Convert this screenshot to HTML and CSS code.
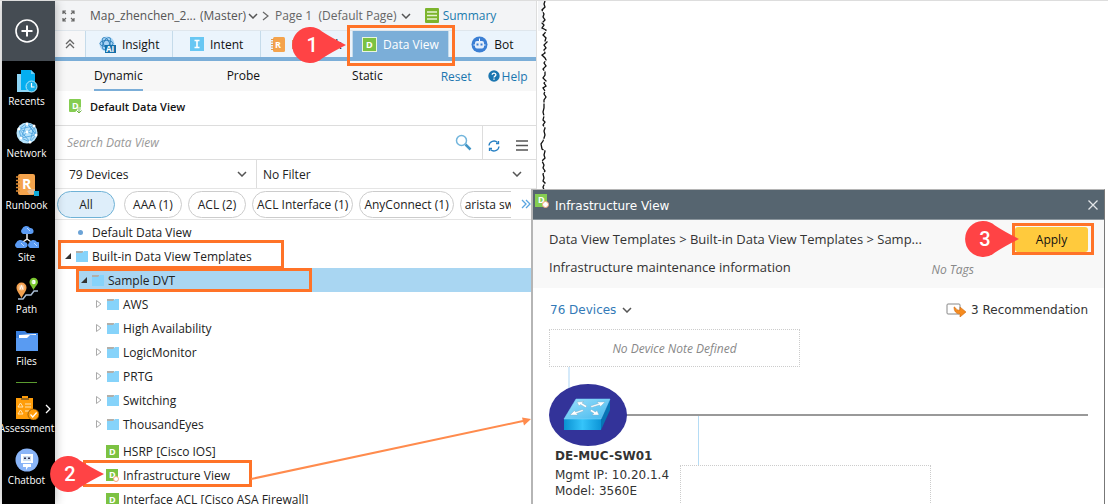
FILE: index.html
```html
<!DOCTYPE html>
<html lang="en">
<head>
    <meta charset="UTF-8">
    <meta name="viewport" content="width=device-width, initial-scale=1.0">
    <title>Data View</title>
    <link rel="stylesheet" href="styles.css">
</head>
<body>
    <!-- shared shapes -->
    <svg class="defs" aria-hidden="true">
        <symbol id="folder" viewBox="0 0 12 12">
            <path d="M0 1h7v3H0z" fill="#b3afa8"/>
            <path d="M0 3h6l2-2h4v11H0z" fill="#86d3fa"/>
        </symbol>
        <symbol id="open" viewBox="0 0 8 8"><path d="M7 1v6H1z" fill="#333"/></symbol>
        <symbol id="closed" viewBox="0 0 8 10"><path d="M1.500 1.500v7L6 5z" fill="#fff" stroke="#aaa"/></symbol>
        <symbol id="down" viewBox="0 0 10 6"><path d="M1 1l4 4 4-4" fill="none" stroke="currentColor" stroke-width="1.500"/></symbol>
        <symbol id="pin" viewBox="0 0 54 36"><path d="M54 18Q40 11 30 4.500A18 18 0 1 0 30 31.500Q40 25 54 18z" fill="#ff4345"/></symbol>
    </svg>

    <nav class="sidebar">
        <button class="add" aria-label="New">
            <svg width="24" height="24" viewBox="0 0 24 24" fill="none" stroke="#fff"><circle cx="12" cy="12" r="11" stroke-width="1.600"/><path d="M12 6.500v11M6.500 12h11" stroke-width="2"/></svg>
        </button>
        <a class="nav-item" href="#">
            <svg width="24" height="24" viewBox="0 0 24 24"><path d="M2 5h4v16h10v2H2z" fill="#8ed5f5"/><path d="M6 1h10l4 4v16H6z" fill="#04aef0"/><path d="M16 1v4h4z" fill="#71cdf5"/><circle cx="16.500" cy="17.500" r="5.500" fill="#19b0ea" stroke="#b9e8fb"/><path d="M16.500 14v4h3" fill="none" stroke="#fff" stroke-width="1.200"/></svg>
            <span>Recents</span>
        </a>
        <a class="nav-item" href="#">
            <svg width="24" height="24" viewBox="0 0 24 24"><circle cx="12" cy="12" r="10.500" fill="#b5e2fb"/><path d="M12 2L4 8l2 9 9 4 6-7-2-9zM4 8l15-3-4 16zM12 2l-6 15 15-3zM4 8l17 6M12 2l9 12M6 17l13-12" fill="none" stroke="#3996d8" stroke-width=".7"/><g fill="#fff"><circle cx="12" cy="3" r="1.500"/><circle cx="4" cy="8" r="1.500"/><circle cx="6" cy="17" r="1.500"/><circle cx="15" cy="21" r="1.500"/><circle cx="21" cy="14" r="1.500"/><circle cx="19" cy="5" r="1.500"/><circle cx="12" cy="11" r="1.500"/></g></svg>
            <span>Network</span>
        </a>
        <a class="nav-item" href="#">
            <svg width="24" height="24" viewBox="0 0 24 24"><rect x="3" y="1" width="17" height="21" rx="2" fill="#f4a34c"/><path d="M1 4h4M1 7.500h4M1 11h4M1 14.500h4M1 18h4" stroke="#d98935" stroke-width="1.300"/><text x="7" y="16" class="glyph glyph-large">R</text><path d="M12 18l4-2h4v5h-6z" fill="#e4b991"/><path d="M19 18h5v5h-5z" fill="#10a9d8"/></svg>
            <span>Runbook</span>
        </a>
        <a class="nav-item" href="#">
            <svg width="24" height="24" viewBox="0 0 24 24"><path d="M12 9v5l-7 5M12 14l7 5" fill="none" stroke="#eee" stroke-width="1.500"/><g fill="#5b9bf3"><path id="cloud" d="M8 9a3 3 0 0 1-1-5 4.500 4.500 0 0 1 8-1 3 3 0 0 1 1 6z"/><use href="#cloud" x="-6" y="14"/><use href="#cloud" x="7" y="14"/></g><path d="M12 3l3 3M6 18l3 3M19 18l3 3" stroke="#b9d8ff"/></svg>
            <span>Site</span>
        </a>
        <a class="nav-item" href="#">
            <svg width="24" height="24" viewBox="0 0 24 24"><path d="M3 22h5l3-4h5l3-4h4" fill="none" stroke="#a9bdd4" stroke-width="1.500"/><path d="M6.500 21C4 16 1.500 14 1.500 10.500a5 5 0 0 1 10 0C11.500 14 9 16 6.500 21z" fill="#f2a04f"/><path d="M18.500 13c-2-4-4-5.500-4-8a4.200 4.200 0 0 1 8.500 0c0 2.500-2.500 4-4.500 8z" fill="#7ac52f"/><circle cx="6.500" cy="10.500" r="3" fill="#f8c48f"/><circle cx="18.700" cy="5" r="2.300" fill="#c6edaa"/><path d="M5 12.500l1.500-4 1.500 4" fill="none" stroke="#fff"/><path d="M18 6.500v-3h1.500v3z" fill="none" stroke="#fff"/></svg>
            <span>Path</span>
        </a>
        <a class="nav-item" href="#">
            <svg width="24" height="24" viewBox="0 0 24 24"><path d="M1 2h9l2 2h11v6H1z" fill="#3b81df"/><path d="M4 6l17-1v6H4z" fill="#fff"/><path d="M1 9h11l3-3h8v16H1z" fill="#599bf2"/></svg>
            <span>Files</span>
        </a>
        <hr>
        <a class="nav-item" href="#">
            <svg width="24" height="24" viewBox="0 0 24 24"><path d="M1 2h6V0h6v2h5v21H1z" fill="#ff9d0a"/><path d="M6 3h8" stroke="#333"/><path d="M3 11l2.500-4L8 11zM3 18l2.500-4L8 18z" fill="none" stroke="#ffe2b0"/><path d="M10 8h6M10 11h6M10 15h4" stroke="#ffe2b0"/><circle cx="18.500" cy="18.500" r="5.500" fill="#ff9d0a" stroke="#5c3b08" stroke-width=".6"/><path d="M15.500 18.500l2.200 2.500 4-4.500" fill="none" stroke="#fff" stroke-width="1.200"/></svg>
            <span>Assessment</span>
            <svg class="more" width="6" height="10" viewBox="0 0 6 10"><path d="M1 1l4 4-4 4" fill="none" stroke="#fff" stroke-width="1.300"/></svg>
        </a>
        <a class="nav-item" href="#">
            <svg width="24" height="24" viewBox="0 0 24 24"><circle cx="12" cy="12" r="11.500" fill="#8ab5f8"/><path d="M6 6h12v9H6zM8 16h8v3h-3l-2 3v-3H8z" fill="#fff"/><path d="M8 8h8v5H8z" fill="#cfdff0"/><path d="M9 9.500h2v1.500H9zM13 9.500h2v1.500h-2z" fill="#335"/></svg>
            <span>Chatbot</span>
        </a>
    </nav>

    <main class="panel">
        <header class="crumbs">
            <svg class="expand" width="13" height="12" viewBox="0 0 13 12" fill="none" stroke="#666" stroke-width="1.200"><path d="M1 4V1h3M1 1l3 3M9 1h3v3M12 1L9 4M1 8v3h3M1 11l3-3M9 11h3V8M12 11L9 8"/></svg>
            <a class="map" href="#">Map_zhenchen_2...</a>
            <a class="branch" href="#">(Master)</a>
            <svg width="10" height="6"><use href="#down"/></svg>
            <svg class="sep" width="7" height="10" viewBox="0 0 7 10"><path d="M1 1l5 4-5 4" fill="none" stroke="#666" stroke-width="1.200"/></svg>
            <a class="page" href="#">Page 1&nbsp; (Default Page)</a>
            <svg width="10" height="6"><use href="#down"/></svg>
            <a class="summary" href="#"><svg width="14" height="15" viewBox="0 0 14 15"><rect width="14" height="15" rx="1" fill="#7cb42d"/><path d="M2 4h10M2 7.500h10M2 11h10" stroke="#e6f3d3" stroke-width="1.300"/></svg>Summary</a>
        </header>

        <div class="tabs">
            <button class="tab collapse" aria-label="Collapse"><svg width="10" height="10" viewBox="0 0 10 10" fill="none" stroke="#666" stroke-width="1.300"><path d="M1 5l4-4 4 4M1 9l4-4 4 4"/></svg></button>
            <button class="tab">
                <svg width="17" height="17" viewBox="0 0 17 17"><circle cx="8" cy="8" r="7.500" fill="#a9d4f5"/><g fill="none" stroke="#2d7fb9"><ellipse cx="7.500" cy="7.500" rx="6.500" ry="3"/><ellipse cx="7.500" cy="7.500" rx="6.500" ry="3" transform="rotate(60 7.500 7.500)"/><ellipse cx="7.500" cy="7.500" rx="6.500" ry="3" transform="rotate(120 7.500 7.500)"/></g><rect x="6" y="9" width="11" height="8" fill="#146fa9"/><text x="7" y="16" class="glyph glyph-tiny">AI</text></svg>
                Insight
            </button>
            <button class="tab"><svg width="14" height="14" viewBox="0 0 14 14"><rect width="14" height="14" fill="#68c7f3"/><path d="M4.500 3.500h5M7 3.500v7M4.500 10.500h5" stroke="#fff" stroke-width="1.600"/></svg>Intent</button>
            <button class="tab tab-runbook"><svg width="14" height="15" viewBox="0 0 14 15"><rect x="2" width="12" height="15" rx="1.500" fill="#f4a34c"/><path d="M0 2.500h3M0 5h3M0 7.500h3M0 10h3M0 12.500h3" stroke="#e59a4b"/><text x="4" y="11" class="glyph">R</text></svg>Runbook</button>
            <button class="tab tab-on">
                <svg width="15" height="15" viewBox="0 0 15 15"><rect width="15" height="15" fill="#e9f5df"/><rect x="1" y="1" width="13" height="13" fill="#7cc242"/><text x="4" y="11" class="glyph">D</text></svg>
                Data View
                <i class="mark mark-tab"></i>
                <span class="callout callout-1"><svg width="54" height="36"><use href="#pin"/></svg><b>1</b></span>
            </button>
            <button class="tab"><svg width="17" height="17" viewBox="0 0 17 17"><circle cx="8.500" cy="8.500" r="8" fill="#3b7fd4"/><path d="M8.500 2.500v3M2.500 9h2M12.500 9h2" stroke="#fff"/><rect x="4" y="5" width="9" height="7.500" rx="2" fill="#e6effb"/><path d="M5.500 7.500h2v2h-2zM9.500 7.500h2v2h-2z" fill="#3b7fd4"/></svg>Bot</button>
        </div>

        <div class="subtabs">
            <button class="subtab subtab-on">Dynamic</button>
            <button class="subtab">Probe</button>
            <button class="subtab">Static</button>
            <a class="reset" href="#">Reset</a>
            <a class="help" href="#"><svg width="12" height="12" viewBox="0 0 12 12"><circle cx="6" cy="6" r="5.700" fill="#1b76b0"/><path d="M4.200 4.800c0-2.500 3.700-2.200 3.700 0C7.900 6.200 6 6 6 7.500M6 8.500v1.300" fill="none" stroke="#fff" stroke-width="1.300"/></svg>Help</a>
        </div>

        <h1 class="view-title">
            <svg width="14" height="15" viewBox="0 0 14 15"><rect width="12" height="13" rx="1" fill="#85cd52"/><text x="3" y="10" class="glyph">D</text><path d="M10 8v6M7.500 11.500L10 14l2.500-2.500" fill="none" stroke="#fff" stroke-width="3"/><path d="M10 8v6M7.500 11.500L10 14l2.500-2.500" fill="none" stroke="#71b744"/></svg>
            Default Data View
        </h1>

        <div class="search">
            <input type="text" placeholder="Search Data View" aria-label="Search Data View">
            <button class="find" aria-label="Search"><svg width="17" height="17" viewBox="0 0 17 17" fill="none"><circle cx="6.500" cy="6.500" r="5" stroke="#72b5dc" stroke-width="1.500"/><path d="M10.500 10.500l5 5" stroke="#4295c6" stroke-width="2.500"/></svg></button>
            <div class="tools">
                <button aria-label="Refresh"><svg width="12" height="12" viewBox="0 0 12 12" fill="none" stroke="#267fc3" stroke-width="1.300"><path d="M1 5.500A5 5 0 0 1 9.500 2.500M11 6.500A5 5 0 0 1 2.500 9.500"/><path d="M10.500 1v2.500H8M1.500 11V8.500H4"/></svg></button>
                <button aria-label="Menu"><svg width="12" height="11" viewBox="0 0 12 11" stroke="#555" stroke-width="1.500"><path d="M0 1h12M0 5.500h12M0 10h12"/></svg></button>
            </div>
        </div>

        <div class="filters">
            <div class="pick pick-devices">
                <select aria-label="Devices"><option>79 Devices</option></select>
                <svg width="10" height="6"><use href="#down"/></svg>
            </div>
            <div class="pick">
                <select aria-label="Filter"><option>No Filter</option></select>
                <svg width="10" height="6"><use href="#down"/></svg>
            </div>
        </div>

        <div class="chips">
            <div class="chip-list">
                <button class="chip chip-on">All</button>
                <button class="chip">AAA (1)</button>
                <button class="chip">ACL (2)</button>
                <button class="chip">ACL Interface (1)</button>
                <button class="chip">AnyConnect (1)</button>
                <button class="chip chip-last">arista sw</button>
            </div>
            <button class="next" aria-label="More"><svg width="10" height="10" viewBox="0 0 10 10" fill="none" stroke="#5aa5e0" stroke-width="1.300"><path d="M1 1l4 4-4 4M5 1l4 4-4 4"/></svg></button>
        </div>

        <ul class="tree">
            <li class="row root"><i class="dot"></i>Default Data View</li>
            <li class="row root"><svg width="8" height="8"><use href="#open"/></svg><svg width="12" height="12"><use href="#folder"/></svg>Built-in Data View Templates<i class="mark mark-builtin"></i></li>
            <li class="row selected"><svg width="8" height="8"><use href="#open"/></svg><svg width="12" height="12"><use href="#folder"/></svg>Sample DVT<i class="mark mark-sample"></i></li>
            <li class="row leaf"><svg width="8" height="10"><use href="#closed"/></svg><svg width="12" height="12"><use href="#folder"/></svg>AWS</li>
            <li class="row leaf"><svg width="8" height="10"><use href="#closed"/></svg><svg width="12" height="12"><use href="#folder"/></svg>High Availability</li>
            <li class="row leaf"><svg width="8" height="10"><use href="#closed"/></svg><svg width="12" height="12"><use href="#folder"/></svg>LogicMonitor</li>
            <li class="row leaf"><svg width="8" height="10"><use href="#closed"/></svg><svg width="12" height="12"><use href="#folder"/></svg>PRTG</li>
            <li class="row leaf"><svg width="8" height="10"><use href="#closed"/></svg><svg width="12" height="12"><use href="#folder"/></svg>Switching</li>
            <li class="row leaf"><svg width="8" height="10"><use href="#closed"/></svg><svg width="12" height="12"><use href="#folder"/></svg>ThousandEyes</li>
            <li class="row view first-view"><svg width="13" height="13" viewBox="0 0 13 13"><rect width="13" height="13" fill="#7cc242"/><text x="3" y="10" class="glyph">D</text></svg>HSRP [Cisco IOS]</li>
            <li class="row view">
                <svg width="13" height="13" viewBox="0 0 13 13"><rect width="12" height="12" fill="#7cc242"/><text x="3" y="9" class="glyph">D</text><circle cx="10" cy="10" r="2.500" fill="#fff" stroke="#f4a67c"/></svg>Infrastructure View
                <i class="mark mark-infra"></i>
                <span class="callout callout-2"><svg width="54" height="36"><use href="#pin"/></svg><b>2</b></span>
            </li>
            <li class="row view"><svg width="13" height="13" viewBox="0 0 13 13"><rect width="13" height="13" fill="#7cc242"/><text x="3" y="10" class="glyph">D</text></svg>Interface ACL [Cisco ASA Firewall]</li>
        </ul>
    </main>

    <!-- torn edge of the map behind the panel -->
    <svg class="tear" width="12" height="190" viewBox="0 0 12 190"><path d="M0 0h7l-2 10 3 8-2 5 1 7H0z" fill="#f3f4f6"/><path d="M7 0l-1 3 1 3-3 3 2 4-1 3 2 3-3 3 2 2-2 3 4 2-1 3-2 2 3 3-1 3 2 1-3 3 2 3-2 2 1 3-3 2 3 3 1 2-2 3 2 3-3 3 2 3v3l-2 3 3 3-2 2 2 3-3 2 2 3-1 3 2 3-2 3v8l-1 4 1 4-1 4 2 2-2 3 2 3-1 3 1 4-2 6-2 3 1 5 3 2-1 4 1 3-3 3 2 4-1 3 2 3-2 3 1 4-1 3 2 2-2 4 1 3 1 3-2 3 1 3" fill="none" stroke="#111" stroke-width="1.300" stroke-dasharray="12 1"/></svg>

    <section class="window">
        <header class="window-bar">
            <svg width="14" height="15" viewBox="0 0 14 15"><rect width="12" height="13" fill="#85cd52"/><text x="3" y="9" class="glyph">D</text><circle cx="10.500" cy="10.500" r="3" fill="#fff" stroke="#f4a67c"/></svg>
            <h2>Infrastructure View</h2>
            <button class="close" aria-label="Close"><svg width="10" height="10" viewBox="0 0 10 10"><path d="M.5.5l9 9M9.500.5l-9 9" stroke="#e3e6e9" stroke-width="1.300"/></svg></button>
        </header>
        <div class="window-head">
            <div class="head-row">
                <span>Data View Templates &gt; Built-in Data View Templates &gt; Samp...</span>
                <button class="apply">Apply
                    <i class="mark mark-apply"></i>
                    <span class="callout callout-3"><svg width="54" height="36"><use href="#pin"/></svg><b>3</b></span>
                </button>
            </div>
            <div class="head-row">
                <span>Infrastructure maintenance information</span>
                <em class="no-tags">No Tags</em>
            </div>
        </div>
        <div class="window-tools">
            <button class="devices">76 Devices <svg width="10" height="6"><use href="#down"/></svg></button>
            <span class="recommend"><svg width="21" height="14" viewBox="0 0 21 14"><rect x="1" y="1" width="13" height="10" rx="1" fill="#fff" stroke="#888"/><path d="M8 4c2 0 2 4 6 3V4l6 5-6 5v-3C10 11 8 8 8 4z" fill="#f68b1e" stroke="#cf6a13" stroke-width=".6"/></svg>3 Recommendation</span>
        </div>
        <div class="canvas">
            <div class="note">No Device Note Defined</div>
            <i class="link link-note"></i>
            <i class="link link-main"></i>
            <i class="link link-drop"></i>
            <div class="note note-empty"></div>
            <div class="device">
                <svg width="78" height="62" viewBox="0 0 78 62">
                    <defs>
                        <linearGradient id="front" x2="1"><stop stop-color="#0a91d2"/><stop offset=".5" stop-color="#35c4fa"/><stop offset="1" stop-color="#0c95d7"/></linearGradient>
                        <linearGradient id="top" y2="1"><stop stop-color="#9bdffb"/><stop offset="1" stop-color="#45b9ee"/></linearGradient>
                    </defs>
                    <ellipse cx="39" cy="31" rx="39" ry="31" fill="#333399"/>
                    <path d="M15 35h37v11H15z" fill="url(#front)"/>
                    <path d="M52 35l9-20v11l-9 20z" fill="#0875b5"/>
                    <path d="M27 15h34l-9 20H15z" fill="url(#top)" stroke="#7ed8ff" stroke-width=".5"/>
                    <g fill="#fff" stroke="#7aa6bf" stroke-width=".4"><path d="M28 18l7-.5-2 1.500 5 3-1.500 1.500-5-3-1.500 1.500z"/><path d="M56 18l-8 0 1.500 1.500-8 2.500 1 1.500 8-2.500 1 1.500z"/><path d="M21 31l8 0-1.500-1.500 7-2.500-1-1.500-7 2.500-1-1.500z"/><path d="M50 31l-7 0 2-1.500-4-2.500 1.500-1.500 4 2.500 1.500-1.500z"/></g>
                </svg>
                <strong>DE-MUC-SW01</strong>
                <span>Mgmt IP: 10.20.1.4</span>
                <span>Model: 3560E</span>
            </div>
        </div>
    </section>

    <svg class="arrow" width="280" height="64" viewBox="0 0 280 64"><path d="M0 62L272 4" stroke="#ff8b4d" stroke-width="2"/><path d="M280 2l-9-1.500 2 8z" fill="#ff8b4d"/></svg>
</body>
</html>
```
FILE: styles.css
```css
* {
    box-sizing: border-box;
}
body {
    display: flex;
    position: relative;
    height: 100vh;
    margin: 0;
    padding-left: 2px;
    overflow: hidden;
    border-top: 1px solid #ddd;
    background: #fff;
    color: #222;
    font-family: "Open Sans", "Noto Sans", sans-serif;
    font-size: 12px;
}
button {
    margin: 0;
    padding: 0;
    border: none;
    background: none;
    color: inherit;
    font: inherit;
    cursor: pointer;
}
a {
    color: inherit;
    text-decoration: none;
}
svg {
    flex: none;
    display: block;
}
.defs {
    position: absolute;
    width: 0;
    height: 0;
}
.glyph {
    fill: #fff;
    font-size: 9px;
    font-weight: bold;
}
.glyph-large {
    font-size: 14px;
}
.glyph-tiny {
    font-size: 8px;
}

/* left navigation */
.sidebar {
    flex: none;
    width: 53px;
    background: #000;
    color: #fff;
    overflow: hidden;
    box-shadow: 0 0 10px rgba(0, 0, 0, 0.3);
    z-index: 1;
}
.add {
    display: flex;
    align-items: center;
    justify-content: center;
    width: 100%;
    height: 60px;
    padding-right: 4px;
    background: #454c53;
}
.nav-item {
    position: relative;
    display: flex;
    flex-direction: column;
    align-items: center;
    height: 52px;
    padding: 8px 4px 0 0;
    font-size: 10px;
    line-height: 16px;
}
.more {
    position: absolute;
    right: 4px;
    top: 16px;
}
.sidebar hr {
    width: 21px;
    height: 1px;
    margin: 9px 18px 5px 14px;
    border: none;
    background: #5b9b2f;
}

/* data view panel */
.panel {
    flex: 0 0 482px;
    border-right: 1px solid #ddd;
}
.crumbs {
    display: flex;
    align-items: center;
    height: 30px;
    padding-left: 7px;
    border-bottom: 1px solid #dfe6ec;
    background: #f3f4f6;
    color: #555;
    white-space: nowrap;
}
.expand {
    margin-right: 15px;
}
.map {
    margin-right: 4px;
}
.branch {
    margin-right: 2px;
}
.sep {
    margin: 0 6px 0 4px;
}
.page {
    margin-right: 4px;
    font-weight: 500;
    color: #666;
}
.summary {
    display: flex;
    align-items: center;
    gap: 4px;
    margin-left: 14px;
    color: #1b7bae;
}
.tabs {
    display: flex;
    height: 30px;
    border-bottom: 4px solid #7baed8;
    background: #ebf4fc;
}
.tab {
    position: relative;
    display: flex;
    align-items: center;
    justify-content: center;
    flex: 1 1 88px;
    gap: 6px;
    border-right: 1px solid #c5dbea;
    color: #111;
}
.collapse {
    flex: 0 0 31px;
    background: #f7f7f8;
}
.tab-runbook {
    flex-basis: 93px;
}
.tab-on {
    flex-basis: 96px;
    background: #7baed8;
    color: #fff;
}
.tab:last-child {
    border-right: none;
}
.subtabs {
    display: flex;
    align-items: center;
    height: 30px;
    padding-left: 39px;
    background: #f7f7f7;
}
.subtab {
    align-self: stretch;
    margin-right: 84px;
    border-bottom: 2px solid transparent;
    color: #111;
}
.subtab-on {
    border-color: #7baed8;
}
.subtab:nth-child(2) {
    margin-right: 92px;
}
.subtab:nth-child(3) {
    margin-right: 58px;
}
.reset,
.help {
    color: #1b76b0;
}
.help {
    display: flex;
    align-items: center;
    gap: 2px;
    margin-left: 16px;
}
.view-title {
    display: flex;
    align-items: center;
    gap: 7px;
    height: 34px;
    margin: 0;
    padding: 0 0 3px 14px;
    font-size: 11px;
    font-weight: 600;
    color: #111;
}
.search {
    display: flex;
    align-items: center;
    height: 35px;
    border: solid #ddd;
    border-width: 1px 0;
}
.search input {
    flex: 1;
    min-width: 0;
    padding: 0 12px;
    border: none;
    outline: none;
    font: inherit;
}
.search input::placeholder {
    color: #999;
    font-style: italic;
}
.find {
    padding: 0 10px;
}
.tools {
    display: flex;
    align-items: center;
    gap: 16px;
    height: 100%;
    padding: 6px 8px 0 5px;
    border-left: 1px solid #ddd;
}
.filters {
    display: flex;
    height: 29px;
    border-bottom: 1px solid #e5e5e5;
}
.pick {
    position: relative;
    display: flex;
    align-items: center;
    flex: 1;
    color: #555;
}
.pick-devices {
    flex: 0 0 202px;
    border-right: 1px solid #ddd;
}
.pick select {
    width: 100%;
    height: 100%;
    padding: 0 6px;
    border: none;
    outline: none;
    background: none;
    appearance: none;
    color: #222;
    font: inherit;
}
.pick-devices select {
    padding-left: 14px;
}
.pick svg {
    position: absolute;
    right: 14px;
    pointer-events: none;
}
.pick-devices svg {
    right: 9px;
}
.chips {
    display: flex;
    align-items: center;
    height: 31px;
    padding-left: 2px;
    border-bottom: 1px solid #e5e5e5;
}
.chip-list {
    display: flex;
    flex: 1;
    gap: 6px;
    min-width: 0;
    overflow: hidden;
}
.chip {
    flex: none;
    min-width: 58px;
    height: 27px;
    padding: 0 4px;
    border: 1px solid #ccc;
    border-radius: 14px;
    color: #222;
}
.chip-on {
    margin-right: 3px;
    border-color: #6fb2d6;
    background: #deeefa;
}
.chip-last {
    width: 80px;
    text-align: left;
}
.next {
    padding: 0 5px 0 10px;
}

/* template tree */
.tree {
    margin: 0;
    padding: 0;
    list-style: none;
}
.row {
    position: relative;
    display: flex;
    align-items: center;
    gap: 4px;
    height: 24px;
    white-space: nowrap;
}
.root {
    padding-left: 9px;
}
.leaf {
    padding-left: 40px;
}
.view {
    padding-left: 51px;
}
.first-view {
    margin-top: 3px;
}
.selected {
    margin-left: 22px;
    padding-left: 3px;
    background: #a9d6f2;
}
.dot {
    width: 5px;
    height: 5px;
    margin: 0 5px 0 14px;
    border-radius: 50%;
    background: #6ba3d6;
}

/* step highlights */
.mark {
    position: absolute;
    border: 3px solid #ff7328;
    pointer-events: none;
}
.mark-tab {
    inset: -6px -7px -9px -6px;
}
.mark-builtin {
    left: 3px;
    top: -4px;
    bottom: -1px;
    width: 226px;
}
.mark-sample {
    left: -1px;
    top: 0;
    bottom: 0;
    width: 236px;
}
.mark-infra {
    left: 28px;
    top: -3px;
    bottom: 0;
    width: 169px;
}
.mark-apply {
    inset: -4px -6px -3px -3px;
}
.callout {
    position: absolute;
    width: 54px;
    height: 36px;
    z-index: 2;
}
.callout b {
    position: absolute;
    left: 0;
    top: 0;
    width: 40px;
    color: #fff;
    font: 500 20px/36px Roboto, sans-serif;
    text-align: center;
}
.callout-1 {
    left: -61px;
    top: -4px;
}
.callout-2 {
    left: -5px;
    top: -7px;
}
.callout-3 {
    left: -50px;
    top: -6px;
}
.arrow {
    position: absolute;
    left: 251px;
    top: 416px;
    z-index: 3;
}
.tear {
    margin-left: 1px;
}

/* floating window */
.window {
    position: absolute;
    left: 531px;
    right: 3px;
    top: 188px;
    bottom: 0;
    overflow: hidden;
    border: solid #b5b5b5;
    border-width: 1px 1px 0 2px;
    border-right-color: #777;
    background: #fff;
    color: #333;
    z-index: 2;
}
.window-bar {
    display: flex;
    align-items: center;
    height: 30px;
    padding: 0 6px 0 2px;
    border-bottom: 1px solid #8a959c;
    background: #566570;
    color: #fff;
}
.window-bar > svg {
    margin-bottom: 6px;
}
.window-bar h2 {
    flex: 1;
    margin: 2px 0 0 6px;
    font: 12px "DejaVu Sans", sans-serif;
}
.window-head {
    padding: 5px 16px 7px;
    background: #f8f8f8;
    font-size: 13px;
}
.head-row {
    display: flex;
    align-items: center;
    justify-content: space-between;
    height: 28px;
}
.apply {
    position: relative;
    width: 73px;
    height: 25px;
    border-radius: 3px;
    background: #ffca3d;
    color: #111;
    font-size: 12px;
    font-weight: 500;
}
.no-tags {
    margin-right: 114px;
    padding-top: 4px;
    color: #888;
    font-size: 12px;
}
.window-tools {
    display: flex;
    align-items: center;
    justify-content: space-between;
    height: 41px;
    padding: 2px 16px 0 17px;
    font-family: "DejaVu Sans", sans-serif;
}
.devices {
    display: flex;
    align-items: center;
    gap: 6px;
    color: #337ab7;
}
.devices svg {
    color: #555;
}
.recommend {
    display: flex;
    align-items: center;
    gap: 4px;
}
.canvas {
    position: relative;
    height: 175px;
}
.note {
    position: absolute;
    left: 16px;
    top: 0;
    width: 251px;
    height: 38px;
    border: 1px dotted #ccc;
    color: #888;
    font-style: italic;
    line-height: 38px;
    text-align: center;
}
.note-empty {
    left: 147px;
    top: 136px;
    height: 60px;
    background: #fff;
}
.link {
    position: absolute;
}
.link-note {
    left: 35px;
    top: 38px;
    width: 2px;
    height: 24px;
    background: #d5eafa;
}
.link-main {
    left: 90px;
    right: 16px;
    top: 85px;
    height: 2px;
    background: #999;
}
.link-drop {
    left: 165px;
    top: 87px;
    width: 1px;
    height: 49px;
    background: #b5dcf5;
}
.device {
    position: absolute;
    left: 16px;
    top: 55px;
    display: flex;
    flex-direction: column;
    font-family: "DejaVu Sans", sans-serif;
    line-height: 16px;
}
.device strong {
    margin: 2px 0 3px;
}
.device strong,
.device span {
    padding-left: 6px;
}
```
